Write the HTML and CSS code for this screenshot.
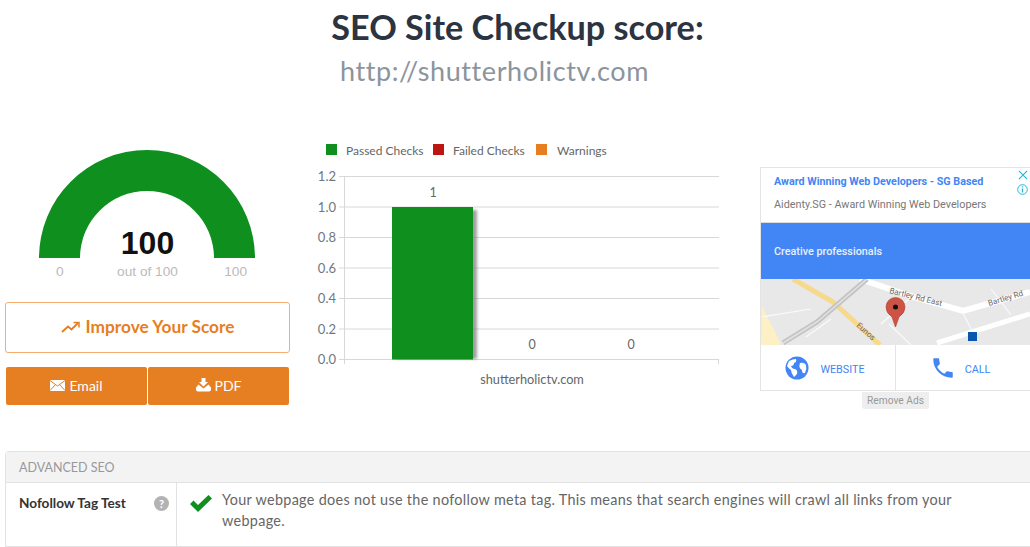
FILE: index.html
```html
<!DOCTYPE html>
<html lang="en">
<head>
  <meta charset="UTF-8">
  <title>SEO Site Checkup score</title>
  <link rel="stylesheet" href="styles.css">
</head>
<body>

  <header class="top">
    <h1>SEO Site Checkup score:</h1>
    <p class="url">http://shutterholictv.com</p>
  </header>

  <div class="score-row">
    <div class="score-col">
      <div class="gauge">
        <svg width="216" height="108" viewBox="0 0 216 108">
          <path d="M0 108A108 108 0 0 1 216 108H175A67 67 0 0 0 41 108Z" fill="#0e8f1e"/>
        </svg>
        <div class="gauge-value">100</div>
        <div class="gauge-labels">
          <span>0</span>
          <span class="mid">out of 100</span>
          <span class="max">100</span>
        </div>
      </div>

      <a class="improve-btn">
        <svg width="19" height="12" viewBox="0 0 19 12" fill="none" stroke="#e67f22" stroke-width="2"><path d="M1 11L7 5.500L10.500 8.500L17 2"/><path d="M12.500 1.500H18V6.500" stroke-width="1.500"/></svg>
        Improve Your Score
      </a>

      <div class="action-btns">
        <a class="action-btn">
          <svg width="15" height="11" viewBox="0 0 15 11"><rect width="15" height="11" fill="#fff"/><path d="M0 .5L7.500 6L15 .5M0 10.500L5.500 4.500M15 10.500L9.500 4.500" fill="none" stroke="#e67f22"/></svg>
          Email
        </a>
        <a class="action-btn">
          <svg width="15" height="14" viewBox="0 0 15 14" fill="#fff"><path d="M5.500 0H9.500V4H12L7.500 8.500L3 4H5.500Z"/><path d="M2.500 6.500L7.500 10.500L12.500 6.500L15 9.500V11.500Q15 13.500 13 13.500H2Q0 13.500 0 11.500V9.500Z"/></svg>
          PDF
        </a>
      </div>
    </div>

    <div class="chart-col">
      <svg class="chart" width="420" height="250" viewBox="0 0 420 250">
        <defs>
          <filter id="barShadow" x="-10%" y="-5%" width="130%" height="110%"><feGaussianBlur stdDeviation="1.500"/></filter>
        </defs>

        <rect x="16" y="9" width="11" height="11" fill="#0e8f1e"/>
        <text x="36" y="20" class="legend">Passed Checks</text>
        <rect x="123" y="9" width="11" height="11" fill="#bd1510"/>
        <text x="143" y="20" class="legend">Failed Checks</text>
        <rect x="226" y="9" width="11" height="11" fill="#e67f22"/>
        <text x="247" y="20" class="legend">Warnings</text>

        <g stroke="#d8d8d8">
          <path d="M29 41.500H409M29 72H409M29 102.500H409M29 133H409M29 163.500H409M29 194H409M29 224.500H409"/>
          <path d="M34.500 41V229M408.500 224V229"/>
        </g>

        <rect x="86" y="75" width="81" height="149" fill="#777" opacity=".7" filter="url(#barShadow)"/>
        <rect x="82" y="72" width="81" height="152.500" fill="#0e8f1e"/>

        <g class="axis">
          <text x="26" y="46">1.2</text>
          <text x="26" y="77">1.0</text>
          <text x="26" y="107">0.8</text>
          <text x="26" y="138">0.6</text>
          <text x="26" y="168">0.4</text>
          <text x="26" y="199">0.2</text>
          <text x="26" y="229">0.0</text>
        </g>

        <g class="bar-label">
          <text x="123" y="62">1</text>
          <text x="222" y="214">0</text>
          <text x="321" y="214">0</text>
          <text x="222" y="249" class="site">shutterholictv.com</text>
        </g>
      </svg>
    </div>

    <div class="ad-col">
      <div class="ad">
        <div class="ad-head">
          <div class="ad-title">Award Winning Web Developers - SG Based</div>
          <div class="ad-sub">Aidenty.SG - Award Winning Web Developers</div>
          <div class="ad-marks">
            <svg width="10" height="10" viewBox="0 0 11 11" fill="none" stroke="#29b6d8" stroke-width="1.300"><path d="M1 1L10 10M10 1L1 10"/></svg>
            <svg width="11" height="11" viewBox="0 0 11 11" fill="none" stroke="#29b6d8"><circle cx="5.500" cy="5.500" r="4.800"/><path d="M5.500 4.500V8.500" stroke-width="1.400"/><path d="M5.500 2.300V3.500" stroke-width="1.400"/></svg>
          </div>
        </div>
        <div class="ad-banner">Creative professionals</div>
        <svg class="ad-map" width="269" height="66" viewBox="0 0 269 66">
          <rect width="269" height="66" fill="#e8e8e8"/>
          <path d="M1 27L19 63V66H0Z" fill="#fdf0c4"/>
          <path d="M99 0L149 17L202 32L269 13" fill="none" stroke="#fff" stroke-width="6"/>
          <path d="M176 64L269 35" fill="none" stroke="#fff" stroke-width="5"/>
          <path d="M32 0L72 23L119 66" fill="none" stroke="#f7d98c" stroke-width="5"/>
          <path d="M106 0L56 43L22 64" fill="none" stroke="#c4c4c4" stroke-width="5"/>
          <path d="M106 0L56 43L22 64" fill="none" stroke="#e2e2e2" stroke-width="1.500"/>
          <path d="M0 38L50 30M45 58L70 40M120 45L150 18M150 66L128 45M200 30L215 60M230 10L250 36" fill="none" stroke="#fafafa" stroke-width="1.200"/>
          <text x="128" y="14" class="map-label" transform="rotate(14 128 14)">Bartley Rd East</text>
          <text x="228" y="27" class="map-label" transform="rotate(-17 228 27)">Bartley Rd</text>
          <text x="95" y="47" class="map-label" transform="rotate(42 95 47)">Eunos</text>
          <rect x="207" y="53" width="9" height="9" fill="#0a55ad"/>
          <path d="M134.500 48L131 38Q125 34 125 28A9.500 9.500 0 0 1 144 28Q144 34 138 38Z" fill="#cf5246" stroke="#a83c32" stroke-width=".6"/>
          <circle cx="134.500" cy="28" r="2.500" fill="#111"/>
        </svg>
        <div class="ad-btns">
          <a class="ad-btn">
            <svg width="24" height="24" viewBox="0 0 24 24"><circle cx="12" cy="12" r="11.500" fill="#4285f4"/><path d="M4 5Q8 3 11 3Q12 6 9 7Q9 10 6 10Q7 13 10 13Q13 14 12 18L9 21Q6 17 6 14Q3 12 2 10ZM15 7Q19 6 21 9Q22 13 20 17Q17 18 17 14Q13 12 15 7Z" fill="#fff"/></svg>
            <span>WEBSITE</span>
          </a>
          <a class="ad-btn">
            <svg width="26" height="26" viewBox="0 0 24 24" fill="#4285f4"><path d="M6.600 10.800c1.400 2.800 3.800 5.100 6.600 6.600l2.200-2.200c.3-.3.700-.4 1-.2 1.100.4 2.300.6 3.600.6.600 0 1 .4 1 1V20c0 .6-.4 1-1 1C10.600 21 3 13.400 3 4c0-.6.400-1 1-1h3.500c.6 0 1 .4 1 1 0 1.300.2 2.500.6 3.600.1.300 0 .7-.2 1z"/></svg>
            <span>CALL</span>
          </a>
        </div>
      </div>
      <div class="remove-ads">Remove Ads</div>
    </div>
  </div>

  <section class="panel">
    <div class="panel-head">ADVANCED SEO</div>
    <div class="panel-row">
      <div class="test-name">
        <span>Nofollow Tag Test</span>
        <span class="help">?</span>
      </div>
      <div class="test-result">
        <svg width="22" height="17" viewBox="0 0 22 17"><path d="M0 9L3.500 5.500L8 10L18.500 0L22 3.500L8 17Z" fill="#0e8f1e"/></svg>
        <p>Your webpage does not use the nofollow meta tag. This means that search engines will crawl all links from your webpage.</p>
      </div>
    </div>
  </section>

</body>
</html>
```

FILE: styles.css
```css
body {
  margin: 0;
  height: 547px;
  overflow: hidden;
  font-family: "Lato", "Open Sans", sans-serif;
  background: white;
  color: #555;
}

a {
  cursor: pointer;
}

.top {
  height: 150px;
  padding-top: 6px;
  box-sizing: border-box;
}

.top h1 {
  margin: 0;
  padding-left: 5px;
  font-size: 34.200px;
  line-height: 42px;
  font-weight: 700;
  color: #2c3442;
  text-align: center;
}

.url {
  margin: 3px 0 0 340px;
  font-size: 27px;
  line-height: 40px;
  letter-spacing: .6px;
  color: #8c949c;
}

.score-row {
  display: grid;
  grid-template-columns: 310px 450px 270px;
  height: 301px;
}

/* gauge + buttons */
.score-col {
  padding-left: 5px;
  width: 285px;
}

.gauge {
  position: relative;
  padding: 0 0 0 34px;
  height: 152px;
}

.gauge svg {
  display: block;
}

.gauge-value {
  position: absolute;
  left: 0;
  right: 0;
  top: 75px;
  text-align: center;
  font-family: "Liberation Sans", Arial, sans-serif;
  font-size: 32px;
  font-weight: 700;
  line-height: 36px;
  color: #111;
}

.gauge-labels {
  display: grid;
  grid-template-columns: 1fr auto 1fr;
  width: 191px;
  margin-left: 17px;
  font-family: "Liberation Sans", Arial, sans-serif;
  font-size: 13.700px;
  line-height: 28px;
  color: #bbb;
  height: 28px;
}

.gauge-labels .mid {
  margin-right: 8px;
}

.gauge-labels .max {
  justify-self: end;
}

.improve-btn {
  display: flex;
  justify-content: center;
  align-items: center;
  gap: 6px;
  height: 51px;
  padding-bottom: 2px;
  box-sizing: border-box;
  border: 1px solid #f4ae74;
  border-radius: 3px;
  color: #e67f22;
  font-size: 17.300px;
  font-weight: 700;
}

.action-btns {
  display: grid;
  grid-template-columns: 1fr 1fr;
  gap: 1px;
  margin: 14px 1px 0;
  height: 38px;
}

.action-btn {
  display: flex;
  justify-content: center;
  align-items: center;
  gap: 4px;
  padding-bottom: 2px;
  box-sizing: border-box;
  background: #e67f22;
  color: white;
  font-size: 14px;
  border-radius: 2px;
}

/* bar chart */
.chart-col {
  margin-top: -15px;
}

.chart {
  display: block;
  overflow: visible;
}

.chart text {
  font-family: "Lato", "Open Sans", sans-serif;
  font-size: 12px;
  fill: #666;
}

.chart .axis text {
  text-anchor: end;
  font-size: 13px;
  fill: #6e7780;
}

.chart .bar-label text {
  text-anchor: middle;
  font-size: 12.500px;
}

.chart .bar-label .site {
  font-size: 12.750px;
}

/* ad box */
.ad-col {
  margin-top: 17px;
}

.ad {
  border: 1px solid #e4e4e4;
  border-right: 0;
  height: 224px;
  box-sizing: border-box;
  display: flex;
  flex-direction: column;
}

.ad-head {
  position: relative;
  height: 55px;
  padding: 7px 0 0 13px;
  box-sizing: border-box;
  border-bottom: 1px solid #ddd;
  font-family: "Roboto", sans-serif;
}

.ad-title {
  color: #4285f4;
  font-size: 10.750px;
  font-weight: 700;
  line-height: 14px;
}

.ad-sub {
  margin-top: 9px;
  font-size: 10.800px;
  line-height: 14px;
  color: #777;
}

.ad-marks {
  position: absolute;
  top: 2px;
  right: 2px;
  display: flex;
  flex-direction: column;
  align-items: center;
  gap: 4px;
}

.ad-marks svg {
  display: block;
}

.ad-banner {
  height: 56px;
  display: flex;
  align-items: center;
  padding-left: 13px;
  background: #4285f4;
  color: #e8f0fe;
  font-family: "Roboto", sans-serif;
  font-size: 10.800px;
  font-weight: 500;
}

.ad-map {
  display: block;
  flex: none;
}

.map-label {
  font-family: "Roboto", sans-serif;
  font-size: 8px;
  fill: #666;
}

.ad-btns {
  flex: 1;
  display: grid;
  grid-template-columns: 134px 1fr;
  background: white;
}

.ad-btn {
  display: flex;
  justify-content: center;
  align-items: center;
  gap: 11px;
  padding-right: 6px;
  color: #4285f4;
  font-family: "Roboto", sans-serif;
  font-size: 10.800px;
}

.ad-btn span {
  margin-top: 3px;
}

.ad-btn + .ad-btn {
  border-left: 1px solid #e4e4e4;
  gap: 9px;
}

.remove-ads {
  width: 67px;
  margin: 1px 0 0 102px;
  background: #eee;
  border-radius: 0 0 3px 3px;
  text-align: center;
  color: #999;
  font-family: "Roboto", sans-serif;
  font-size: 10.200px;
  line-height: 17px;
}

/* advanced seo table */
.panel {
  margin-left: 5px;
  border: 1px solid #e2e2e2;
  border-right: 0;
  border-radius: 4px 0 0 0;
}

.panel-head {
  height: 30px;
  padding-left: 13px;
  background: #f3f3f3;
  border-bottom: 1px solid #e2e2e2;
  font-size: 12.500px;
  line-height: 31px;
  color: #999;
}

.panel-row {
  display: grid;
  grid-template-columns: 171px 1fr;
  height: 63px;
}

.test-name {
  display: flex;
  justify-content: space-between;
  padding: 12px 7px 0 13px;
  border-right: 1px solid #e2e2e2;
  font-size: 13.600px;
  font-weight: 700;
  color: #333;
}

.help {
  width: 15px;
  height: 15px;
  margin-top: 1px;
  border-radius: 50%;
  background: #b3b3b3;
  color: white;
  font-size: 11px;
  line-height: 15px;
  text-align: center;
}

.test-result {
  display: flex;
  gap: 10px;
  padding: 6px 60px 0 13px;
}

.test-result svg {
  flex: none;
  margin-top: 6px;
}

.test-result p {
  margin: 0;
  font-size: 14.400px;
  line-height: 21px;
  letter-spacing: .31px;
  color: #666;
}
```
